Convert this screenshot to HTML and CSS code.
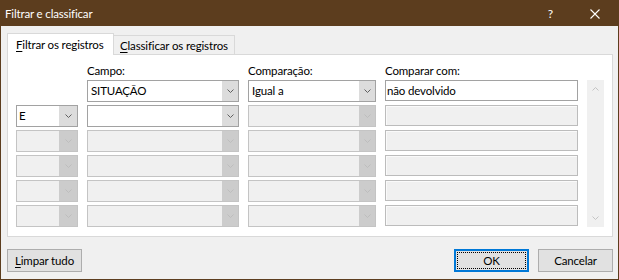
FILE: index.html
```html
<!DOCTYPE html>
<html lang="pt">
<head>
<meta charset="utf-8">
<title>Filtrar e classificar</title>
<link rel="stylesheet" href="styles.css">
</head>
<body>
<div class="window">
  <div class="titlebar">
    <span class="title">Filtrar e classificar</span>
    <div class="tb-buttons">
      <span class="help">?</span>
      <svg class="close" width="10" height="10" viewBox="0 0 10 10"><path d="M0.5 0.5 L9.5 9.5 M9.5 0.5 L0.5 9.5" stroke="#fff" stroke-width="1.1" fill="none"/></svg>
    </div>
  </div>
  <div class="content">
    <div class="tabs">
      <div class="tab active"><u>F</u>iltrar os registros</div>
      <div class="tab"><u>C</u>lassificar os registros</div>
    </div>
    <div class="panel">
      <div class="grid">
        <div></div>
        <div class="label">Campo:</div>
        <div class="label">Comparação:</div>
        <div class="label">Comparar com:</div>
        <div></div>

        <div class="scrollbar">
          <svg width="7" height="4" viewBox="0 0 7 4"><polyline points="0.5,3.5 3.5,0.5 6.5,3.5" fill="none" stroke="#c4c4c4" stroke-width="1"/></svg>
          <svg width="7" height="4" viewBox="0 0 7 4"><polyline points="0.5,0.5 3.5,3.5 6.5,0.5" fill="none" stroke="#c4c4c4" stroke-width="1"/></svg>
        </div>

        <!-- row 1 -->
        <div></div>
        <div class="combo"><span class="val">SITUAÇÃO</span><span class="btn"><svg width="7" height="4" viewBox="0 0 7 4"><polyline points="0.5,0.5 3.5,3.5 6.5,0.5"/></svg></span></div>
        <div class="combo"><span class="val">Igual a</span><span class="btn"><svg width="7" height="4" viewBox="0 0 7 4"><polyline points="0.5,0.5 3.5,3.5 6.5,0.5"/></svg></span></div>
        <div class="textbox">não devolvido</div>

        <!-- row 2 -->
        <div class="combo small"><span class="val">E</span><span class="btn"><svg width="7" height="4" viewBox="0 0 7 4"><polyline points="0.5,0.5 3.5,3.5 6.5,0.5"/></svg></span></div>
        <div class="combo"><span class="val"></span><span class="btn"><svg width="7" height="4" viewBox="0 0 7 4"><polyline points="0.5,0.5 3.5,3.5 6.5,0.5"/></svg></span></div>
        <div class="combo disabled"><span class="val"></span><span class="btn"><svg width="7" height="4" viewBox="0 0 7 4"><polyline points="0.5,0.5 3.5,3.5 6.5,0.5"/></svg></span></div>
        <div class="textbox disabled"></div>

        <!-- row 3 -->
        <div class="combo small disabled"><span class="val"></span><span class="btn"><svg width="7" height="4" viewBox="0 0 7 4"><polyline points="0.5,0.5 3.5,3.5 6.5,0.5"/></svg></span></div>
        <div class="combo disabled"><span class="val"></span><span class="btn"><svg width="7" height="4" viewBox="0 0 7 4"><polyline points="0.5,0.5 3.5,3.5 6.5,0.5"/></svg></span></div>
        <div class="combo disabled"><span class="val"></span><span class="btn"><svg width="7" height="4" viewBox="0 0 7 4"><polyline points="0.5,0.5 3.5,3.5 6.5,0.5"/></svg></span></div>
        <div class="textbox disabled"></div>

        <!-- row 4 -->
        <div class="combo small disabled"><span class="val"></span><span class="btn"><svg width="7" height="4" viewBox="0 0 7 4"><polyline points="0.5,0.5 3.5,3.5 6.5,0.5"/></svg></span></div>
        <div class="combo disabled"><span class="val"></span><span class="btn"><svg width="7" height="4" viewBox="0 0 7 4"><polyline points="0.5,0.5 3.5,3.5 6.5,0.5"/></svg></span></div>
        <div class="combo disabled"><span class="val"></span><span class="btn"><svg width="7" height="4" viewBox="0 0 7 4"><polyline points="0.5,0.5 3.5,3.5 6.5,0.5"/></svg></span></div>
        <div class="textbox disabled"></div>

        <!-- row 5 -->
        <div class="combo small disabled"><span class="val"></span><span class="btn"><svg width="7" height="4" viewBox="0 0 7 4"><polyline points="0.5,0.5 3.5,3.5 6.5,0.5"/></svg></span></div>
        <div class="combo disabled"><span class="val"></span><span class="btn"><svg width="7" height="4" viewBox="0 0 7 4"><polyline points="0.5,0.5 3.5,3.5 6.5,0.5"/></svg></span></div>
        <div class="combo disabled"><span class="val"></span><span class="btn"><svg width="7" height="4" viewBox="0 0 7 4"><polyline points="0.5,0.5 3.5,3.5 6.5,0.5"/></svg></span></div>
        <div class="textbox disabled"></div>

        <!-- row 6 -->
        <div class="combo small disabled"><span class="val"></span><span class="btn"><svg width="7" height="4" viewBox="0 0 7 4"><polyline points="0.5,0.5 3.5,3.5 6.5,0.5"/></svg></span></div>
        <div class="combo disabled"><span class="val"></span><span class="btn"><svg width="7" height="4" viewBox="0 0 7 4"><polyline points="0.5,0.5 3.5,3.5 6.5,0.5"/></svg></span></div>
        <div class="combo disabled"><span class="val"></span><span class="btn"><svg width="7" height="4" viewBox="0 0 7 4"><polyline points="0.5,0.5 3.5,3.5 6.5,0.5"/></svg></span></div>
        <div class="textbox disabled"></div>
      </div>
    </div>
    <div class="footer">
      <div class="button"><span class="btn-text"><u>L</u>impar tudo</span></div>
      <div class="spacer"></div>
      <div class="button default"><span class="focus">OK</span></div>
      <div class="button"><span class="btn-text">Cancelar</span></div>
    </div>
  </div>
</div>
</body>
</html>
```

FILE: styles.css
```css
* { box-sizing: border-box; }

html, body {
  margin: 0;
  padding: 0;
  background: #f0f0f0;
}

body {
  font-family: Lato, "Liberation Sans", sans-serif;
  font-size: 11.5px;
  letter-spacing: -0.15px;
  color: #000;
}

.window {
  width: 619px;
  height: 280px;
  border: 1px solid #5c3d1e;
  background: #f0f0f0;
  display: flex;
  flex-direction: column;
}

.titlebar {
  height: 25px;
  flex: none;
  background: #5c3d1e;
  color: #fff;
  display: flex;
  align-items: flex-start;
  padding: 5px 0 0 4px;
}

.title {
  line-height: 15px;
  flex: 1;
}

.tb-buttons {
  display: flex;
  align-items: center;
  height: 15px;
}

.help {
  line-height: 15px;
  margin-right: 37px;
  font-size: 12px;
}

.close {
  display: block;
  margin-right: 18px;
}

.content {
  flex: 1;
  display: flex;
  flex-direction: column;
  padding: 7px 5px 7px 6px;
}

.tabs {
  display: flex;
  align-items: flex-end;
  height: 21px;
  flex: none;
}

.tab {
  border: 1px solid #d9d9d9;
  border-bottom: none;
  background: #f0f0f0;
  height: 19px;
  line-height: 15px;
  padding: 2px 5px 0 6px;
  width: 122px;
  margin-left: -1px;
  white-space: nowrap;
}

.tab.active {
  background: #fff;
  height: 22px;
  margin-bottom: -1px;
  margin-left: 0;
  padding: 3px 0 0 8px;
  width: 107px;
  position: relative;
  z-index: 1;
}

.tab u, .button u {
  text-decoration: underline;
  text-underline-offset: 2px;
}

.panel {
  height: 183px;
  flex: none;
  border: 1px solid #d9d9d9;
  background: #fff;
  padding: 8px 0 0 8px;
}

.grid {
  display: grid;
  grid-template-columns: 62px 152px 128px 193px 17px;
  grid-template-rows: 14px repeat(6, 22px);
  column-gap: 9px;
  row-gap: 3px;
}

.label {
  line-height: 16px;
  height: 16px;
  white-space: nowrap;
}

.combo {
  display: flex;
  border: 1px solid #a2a2a2;
  background: #fff;
  height: 22px;
}

.combo .val {
  flex: 1;
  line-height: 20px;
  padding-left: 3px;
  white-space: nowrap;
  overflow: hidden;
}

.combo.small .val {
  padding-left: 2px;
}

.combo .btn {
  width: 16px;
  flex: none;
  background: #dcdcdc;
  display: flex;
  align-items: center;
  justify-content: center;
}

.combo .btn svg {
  display: block;
  fill: none;
  stroke: #606060;
  stroke-width: 1;
}

.combo.small .btn {
  width: 18px;
}

.combo.disabled {
  border-color: #c4c4c4;
  background: #f0f0f0;
}

.combo.disabled .btn {
  background: #cccccc;
}

.combo.disabled .btn svg {
  stroke: #bdbdbd;
}

.textbox {
  border: 1px solid #a2a2a2;
  background: #fff;
  height: 21px;
  line-height: 19px;
  padding-left: 1px;
  white-space: nowrap;
}

.textbox.disabled {
  border-color: #bcbcbc;
  background: #f0f0f0;
  box-shadow: inset 1px 1px 0 #fafafa;
}

.scrollbar {
  grid-column: 5;
  grid-row: 2 / 8;
  background: #f0f0f0;
  display: flex;
  flex-direction: column;
  justify-content: space-between;
  align-items: center;
  padding: 7px 0 7px 0;
}

.scrollbar svg {
  display: block;
}

.footer {
  display: flex;
  margin-top: 12px;
  height: 23px;
  flex: none;
}

.spacer {
  flex: 1;
}

.button {
  width: 75px;
  height: 23px;
  border: 1px solid #adadad;
  background: #e1e1e1;
  display: flex;
  align-items: center;
  justify-content: center;
  line-height: 15px;
}

.button + .button {
  margin-left: 9px;
}

.button.default {
  border: 2px solid #0078d7;
  padding: 1px;
}

.button .focus {
  flex: 1;
  align-self: stretch;
  border: 1px dotted #000;
  display: flex;
  align-items: center;
  justify-content: center;
}
```
